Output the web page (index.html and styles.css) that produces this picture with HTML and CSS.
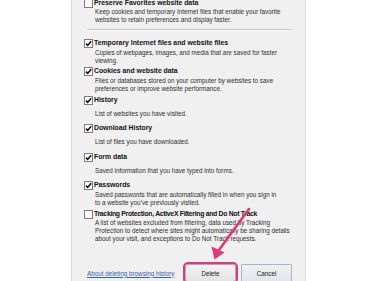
FILE: index.html
```html
<!DOCTYPE html>
<html>
<head>
<meta charset="utf-8">
<link rel="stylesheet" href="styles.css">
</head>
<body>
<div class="page">
  <div class="dialog">
    <div class="item first">
      <span class="cb"></span>
      <div class="title">Preserve Favorites website data</div>
      <div class="desc">Keep cookies and temporary Internet files that enable your favorite websites to retain preferences and display faster.</div>
    </div>
    <div class="sep"></div>
    <div class="item">
      <span class="cb checked"><svg viewBox="0 0 9 9"><path d="M2 4.6 L3.7 6.4 L7.2 2.2"/></svg></span>
      <div class="title">Temporary Internet files and website files</div>
      <div class="desc">Copies of webpages, images, and media that are saved for faster viewing.</div>
    </div>
    <div class="item">
      <span class="cb checked"><svg viewBox="0 0 9 9"><path d="M2 4.6 L3.7 6.4 L7.2 2.2"/></svg></span>
      <div class="title">Cookies and website data</div>
      <div class="desc">Files or databases stored on your computer by websites to save preferences or improve website performance.</div>
    </div>
    <div class="item">
      <span class="cb checked"><svg viewBox="0 0 9 9"><path d="M2 4.6 L3.7 6.4 L7.2 2.2"/></svg></span>
      <div class="title">History</div>
      <div class="desc">List of websites you have visited.</div>
    </div>
    <div class="item">
      <span class="cb checked"><svg viewBox="0 0 9 9"><path d="M2 4.6 L3.7 6.4 L7.2 2.2"/></svg></span>
      <div class="title">Download History</div>
      <div class="desc">List of files you have downloaded.</div>
    </div>
    <div class="item">
      <span class="cb checked"><svg viewBox="0 0 9 9"><path d="M2 4.6 L3.7 6.4 L7.2 2.2"/></svg></span>
      <div class="title">Form data</div>
      <div class="desc">Saved information that you have typed into forms.</div>
    </div>
    <div class="item">
      <span class="cb checked"><svg viewBox="0 0 9 9"><path d="M2 4.6 L3.7 6.4 L7.2 2.2"/></svg></span>
      <div class="title">Passwords</div>
      <div class="desc">Saved passwords that are automatically filled in when you sign in<br>to a website you’ve previously visited.</div>
    </div>
    <div class="item last">
      <span class="cb"></span>
      <div class="title tight">Tracking Protection, ActiveX Filtering and Do Not Track</div>
      <div class="desc">A list of websites excluded from filtering, data used by Tracking Protection to detect where sites might automatically be sharing details about your visit, and exceptions to Do Not Track requests.</div>
    </div>
    <div class="footer">
      <a class="link" href="#">About deleting browsing history</a>
      <button class="btn delete">Delete</button>
      <button class="btn cancel">Cancel</button>
    </div>
  </div>
  <svg class="arrow" viewBox="0 0 375 281" width="375" height="281">
    <line x1="249" y1="209" x2="219" y2="250"/>
    <polygon points="214.5,259.5 211.5,246.5 224.5,252.5"/>
  </svg>
</div>
</body>
</html>
```
FILE: styles.css
```css
html, body {
  margin: 0;
  padding: 0;
  background: #ffffff;
}
.page {
  position: relative;
  width: 375px;
  height: 281px;
  overflow: hidden;
  background: #ffffff;
  font-family: "Liberation Sans", Arial, sans-serif;
}
.dialog {
  margin-left: 71px;
  width: 208px;
  height: 300px;
  background: #f0f0f0;
  border-left: 1px solid #dadada;
  border-right: 1px solid #dadada;
  padding: 0 13px 0 12px;
}
.item {
  display: grid;
  grid-template-columns: 10px 1fr;
  height: 28.5px;
}
.item.first {
  margin-top: -2px;
  height: 25px;
}
.item.last {
  height: auto;
}
.cb {
  grid-row: 1;
  grid-column: 1;
  width: 7px;
  height: 7px;
  margin-top: 1px;
  border: 1px solid #7d7d7d;
  background: #ffffff;
  display: block;
}
.cb svg {
  display: block;
  width: 9px;
  height: 9px;
  margin: -1px 0 0 -1px;
}
.cb svg path {
  fill: none;
  stroke: #111111;
  stroke-width: 1.6;
}
.title {
  grid-row: 1;
  grid-column: 2;
  font-size: 6.85px;
  font-weight: bold;
  line-height: 9px;
  color: #111111;
  white-space: nowrap;
}
.title.tight {
  letter-spacing: -0.3px;
}
.desc {
  grid-row: 2;
  grid-column: 2;
  padding-left: 1px;
  font-size: 6.3px;
  line-height: 8px;
  color: #2e2e2e;
}
.sep {
  height: 1px;
  background: #c8c8c8;
  border-bottom: 1px solid #fafafa;
  margin: 6px 0 6.5px 3px;
}
.footer {
  display: flex;
  align-items: center;
  margin-top: 21.5px;
  padding-left: 3px;
}
.link {
  font-size: 6.3px;
  color: #3363b5;
  text-decoration: underline;
  margin-right: auto;
}
.btn {
  width: 51px;
  height: 18px;
  padding: 0;
  font-family: "Liberation Sans", Arial, sans-serif;
  font-size: 6.3px;
  color: #222222;
  background: linear-gradient(#f3f3f3, #e3e3e3);
  border: 1px solid #adadad;
  border-radius: 1px;
}
.delete {
  outline: 2px solid #e0387a;
  outline-offset: 0;
  border-radius: 3px;
}
.cancel {
  margin-left: 5px;
  border-color: #a6b6c9;
  background: linear-gradient(#eef1f4, #e2e5e9);
}
.arrow {
  position: absolute;
  left: 0;
  top: 0;
  pointer-events: none;
}
.arrow line {
  stroke: #e0387a;
  stroke-width: 2.6;
  stroke-linecap: round;
}
.arrow polygon {
  fill: #e0387a;
}
```
